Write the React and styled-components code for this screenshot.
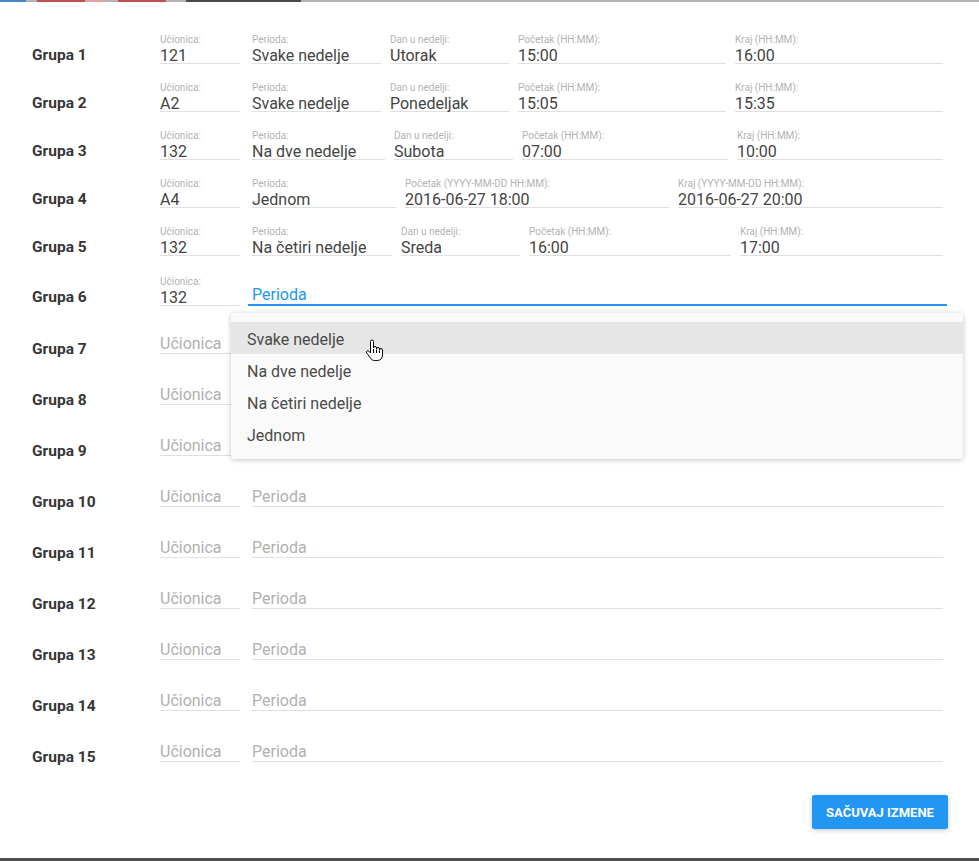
import React from "react";
import styled, { createGlobalStyle } from "styled-components";

const GlobalStyle = createGlobalStyle`
  html, body {
    margin: 0;
    padding: 0;
    font-family: Roboto, "Liberation Sans", sans-serif;
  }
  * { box-sizing: border-box; }
`;

const rows = [
  {
    name: "Grupa 1",
    h: 48,
    mb: 1,
    fields: [
      { label: "Učionica:", value: "121", w: 80 },
      { label: "Perioda:", value: "Svake nedelje", w: 129 },
      { label: "Dan u nedelji:", value: "Utorak", w: 119 },
      { label: "Početak (HH:MM):", value: "15:00", w: 208 },
      { label: "Kraj (HH:MM):", value: "16:00" },
    ],
  },
  {
    name: "Grupa 2",
    h: 48,
    mb: 1,
    fields: [
      { label: "Učionica:", value: "A2", w: 80 },
      { label: "Perioda:", value: "Svake nedelje", w: 129 },
      { label: "Dan u nedelji:", value: "Ponedeljak", w: 119 },
      { label: "Početak (HH:MM):", value: "15:05", w: 208 },
      { label: "Kraj (HH:MM):", value: "15:35" },
    ],
  },
  {
    name: "Grupa 3",
    h: 48,
    mb: 1,
    fields: [
      { label: "Učionica:", value: "132", w: 80 },
      { label: "Perioda:", value: "Na dve nedelje", w: 133 },
      { label: "Dan u nedelji:", value: "Subota", w: 119 },
      { label: "Početak (HH:MM):", value: "07:00", w: 206 },
      { label: "Kraj (HH:MM):", value: "10:00" },
    ],
  },
  {
    name: "Grupa 4",
    h: 48,
    mb: 1,
    fields: [
      { label: "Učionica:", value: "A4", w: 80 },
      { label: "Perioda:", value: "Jednom", w: 144 },
      { label: "Početak (YYYY-MM-DD HH:MM):", value: "2016-06-27 18:00", w: 264 },
      { label: "Kraj (YYYY-MM-DD HH:MM):", value: "2016-06-27 20:00" },
    ],
  },
  {
    name: "Grupa 5",
    h: 48,
    mb: 1,
    fields: [
      { label: "Učionica:", value: "132", w: 80 },
      { label: "Perioda:", value: "Na četiri nedelje", w: 140 },
      { label: "Dan u nedelji:", value: "Sreda", w: 119 },
      { label: "Početak (HH:MM):", value: "16:00", w: 202 },
      { label: "Kraj (HH:MM):", value: "17:00" },
    ],
  },
  {
    name: "Grupa 6",
    h: 50,
    mb: 1,
    fields: [
      { label: "Učionica:", value: "132", w: 80 },
      { placeholder: "Perioda", focused: true },
    ],
  },
];

const emptyHeights = [48, 51, 51, 51, 51, 51, 51, 51, 51];
emptyHeights.forEach((h, i) => {
  rows.push({
    name: `Grupa ${i + 7}`,
    h,
    mb: -3,
    fields: [{ placeholder: "Učionica", w: 80 }, { placeholder: "Perioda" }],
  });
});

const menuItems = ["Svake nedelje", "Na dve nedelje", "Na četiri nedelje", "Jednom"];

const strip = [
  { w: 26, c: "#4a86c5" },
  { w: 11, c: "transparent" },
  { w: 48, c: "#c0504d" },
  { w: 20, c: "#d9a6a5" },
  { w: 13, c: "transparent" },
  { w: 48, c: "#c0504d" },
  { w: 20, c: "transparent" },
  { w: 115, c: "#4a4a4a" },
];

function HandCursor() {
  return (
    <svg width="19" height="23" viewBox="0 0 19 23">
      <path
        d="M5.5 2.5a1.5 1.5 0 0 1 3 0V9a1.5 1.5 0 0 1 3 0v1a1.5 1.5 0 0 1 3 0v1a1.5 1.5 0 0 1 3 0V16c0 3-2 5.5-5 5.5H9.5c-2 0-3-1-4.2-2.6L1.6 13.8a1.4 1.4 0 0 1 2.2-1.7L5.5 14Z"
        fill="#fff"
        stroke="#000"
        strokeWidth="1"
        strokeLinejoin="round"
      />
      <path d="M8.5 10v4M11.5 10.5v3.5M14.5 11.5v2.5" stroke="#000" strokeWidth="1" />
    </svg>
  );
}

export default function App() {
  return (
    <>
      <GlobalStyle />
      <Backdrop>
        <TopStrip>
          {strip.map((s, i) => (
            <Seg key={i} $w={s.w} $c={s.c} />
          ))}
        </TopStrip>
        <Dialog>
          <Rows>
            {rows.map((row) => (
              <Row key={row.name} $h={row.h}>
                <GroupName $mb={row.mb}>{row.name}</GroupName>
                <FieldGroup>
                  {row.fields.map((f, i) => (
                    <Field key={i} $w={f.w} $focused={f.focused}>
                      {f.label && <SmallLabel>{f.label}</SmallLabel>}
                      {f.value ? (
                        <Value>{f.value}</Value>
                      ) : (
                        <Value $tone={f.focused ? "focus" : "placeholder"}>
                          {f.placeholder}
                        </Value>
                      )}
                      {f.focused && (
                        <Menu>
                          {menuItems.map((m, j) => (
                            <MenuItem key={m} $active={j === 0}>
                              {m}
                              {j === 0 && (
                                <Cursor>
                                  <HandCursor />
                                </Cursor>
                              )}
                            </MenuItem>
                          ))}
                        </Menu>
                      )}
                    </Field>
                  ))}
                </FieldGroup>
              </Row>
            ))}
          </Rows>
          <Footer>
            <SaveButton>SAČUVAJ IZMENE</SaveButton>
          </Footer>
        </Dialog>
      </Backdrop>
    </>
  );
}

const Backdrop = styled.div`
  height: 861px;
  overflow: hidden;
  background: #4f4f4f;
  display: flex;
  flex-direction: column;
`;

const TopStrip = styled.div`
  height: 2px;
  display: flex;
  background: #b4b4b4;
`;

const Seg = styled.div`
  width: ${(p) => p.$w}px;
  background: ${(p) => p.$c};
`;

const Dialog = styled.div`
  height: 856px;
  background: #fff;
  display: flex;
  flex-direction: column;
  padding: 14px 36px 0 32px;
`;

const Rows = styled.div`
  display: flex;
  flex-direction: column;
`;

const Row = styled.div`
  display: flex;
  align-items: flex-end;
  height: ${(p) => p.$h}px;
`;

const GroupName = styled.div`
  width: 128px;
  flex-shrink: 0;
  font-size: 15.5px;
  font-weight: 700;
  line-height: 15px;
  color: #363636;
  margin-bottom: ${(p) => p.$mb}px;
`;

const FieldGroup = styled.div`
  flex: 1;
  display: flex;
  align-items: flex-end;
  gap: 9px;

  & > :first-child {
    margin-right: 3px;
  }
`;

const Field = styled.div`
  position: relative;
  display: flex;
  flex-direction: column;
  justify-content: flex-end;
  ${(p) => (p.$w ? `width: ${p.$w}px; flex-shrink: 0;` : "flex: 1;")}
  min-width: 0;
  border-bottom: ${(p) => (p.$focused ? "none" : "1px solid #e0e0e0")};

  ${(p) =>
    p.$focused &&
    `
    &::after {
      content: "";
      position: absolute;
      left: -4px;
      right: -4px;
      bottom: 0;
      height: 2px;
      background: #2196f3;
    }
  `}
`;

const SmallLabel = styled.div`
  font-size: 10px;
  line-height: 12px;
  margin-bottom: 2px;
  color: #b3b3b3;
  white-space: nowrap;
`;

const Value = styled.div`
  font-size: 16px;
  line-height: 15px;
  white-space: nowrap;
  color: ${(p) =>
    p.$tone === "placeholder" ? "#b0b0b0" : p.$tone === "focus" ? "#2196f3" : "#444"};
  padding-bottom: ${(p) =>
    p.$tone === "placeholder" ? 2 : p.$tone === "focus" ? 4 : 0}px;
`;

const Menu = styled.div`
  position: absolute;
  top: calc(100% + 7px);
  left: -21px;
  right: -20px;
  padding: 9px 0;
  background: #fafafa;
  border-radius: 2px;
  box-shadow: 0 1px 6px rgba(0, 0, 0, 0.12), 0 1px 4px rgba(0, 0, 0, 0.12);
  z-index: 10;
`;

const MenuItem = styled.div`
  position: relative;
  height: 32px;
  padding: 4px 0 0 16px;
  line-height: 28px;
  font-size: 16px;
  color: #4a4a4a;
  background: ${(p) => (p.$active ? "#e6e6e6" : "transparent")};
`;

const Cursor = styled.div`
  position: absolute;
  left: 134px;
  top: 17px;
  line-height: 0;
`;

const Footer = styled.div`
  display: flex;
  justify-content: flex-end;
  padding: 33px 0 0;
  margin-right: -5px;
`;

const SaveButton = styled.button`
  width: 136px;
  height: 34px;
  border: none;
  border-radius: 2px;
  background: #2196f3;
  color: #fff;
  font-family: Roboto, "Liberation Sans", sans-serif;
  font-size: 13px;
  font-weight: 700;
  padding: 0;
  box-shadow: 0 1px 6px rgba(0, 0, 0, 0.12), 0 1px 4px rgba(0, 0, 0, 0.12);
`;
